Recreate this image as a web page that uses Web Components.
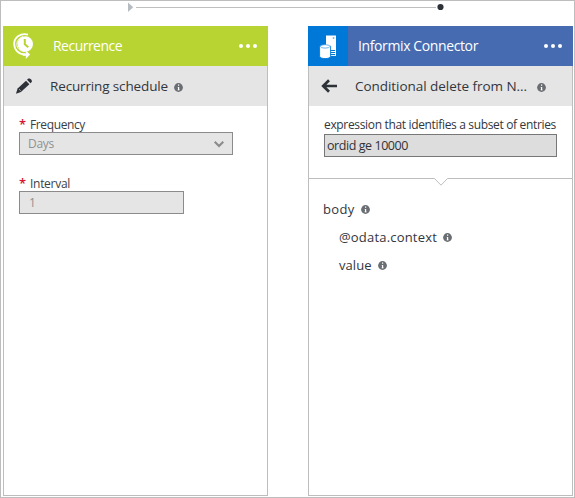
<!DOCTYPE html>
<html lang="en">
<head>
<meta charset="utf-8">
<title>Logic flow</title>
<style>
html, body { margin: 0; height: 100%; background: #fff; font-family: "Open Sans", "Noto Sans", sans-serif; color: #32363d; }
</style>
</head>
<body>
<flow-canvas>
  <flow-connector slot="connector"></flow-connector>
  <flow-card accent="#b8d432" icon="recurrence" glyph="pencil">
    <fit-text slot="title" w="69" size="14">Recurrence</fit-text>
    <fit-text slot="subtitle" w="118" size="13.5">Recurring schedule</fit-text>
    <form-field required kind="select" w="214">
      <fit-text slot="label" w="55" size="12">Frequency</fit-text>
      <fit-text slot="value" w="26" size="12">Days</fit-text>
    </form-field>
    <form-field required w="165" class="second">
      <fit-text slot="label" w="40" size="12">Interval</fit-text>
      <fit-text slot="value" size="12">1</fit-text>
    </form-field>
  </flow-card>
  <flow-card accent="#466bb0" icon="database" glyph="back">
    <fit-text slot="title" w="120" size="14">Informix Connector</fit-text>
    <fit-text slot="subtitle" w="172" size="13.5">Conditional delete from N...</fit-text>
    <form-field strong w="233">
      <fit-text slot="label" w="232" size="12">expression that identifies a subset of entries</fit-text>
      <fit-text slot="value" w="81" size="12.5">ordid ge 10000</fit-text>
    </form-field>
    <output-tree>
      <output-item><fit-text w="31.5" size="13">body</fit-text></output-item>
      <output-item nested><fit-text w="98" size="13">@odata.context</fit-text></output-item>
      <output-item nested><fit-text w="32.5" size="13">value</fit-text></output-item>
    </output-tree>
  </flow-card>
</flow-canvas>
<script>
const define = (name, html, setup) => customElements.define(name, class extends HTMLElement {
  connectedCallback() {
    if (this.shadowRoot) return;
    this.attachShadow({ mode: 'open' }).innerHTML = html;
    if (setup) setup(this, this.shadowRoot);
  }
});

/* Text run whose tracking is adjusted to fill a given width. */
define('fit-text', `<style>
:host { display: inline-block; white-space: nowrap; line-height: 20px; }
span { display: inline-block; }
</style><span><slot></slot></span>`, (el, root) => {
  const span = root.querySelector('span');
  el.style.fontSize = el.getAttribute('size') + 'px';
  const w = parseFloat(el.getAttribute('w'));
  if (w) span.style.letterSpacing = (w - span.getBoundingClientRect().width) / el.textContent.length + 'px';
});

define('info-dot', `<style>
:host { display: block; width: 9px; height: 9px; flex: none; }
svg { display: block; }
</style><svg width="9" height="9" viewBox="0 0 9 9"><circle cx="4.5" cy="4.5" r="4.4" fill="#6a6e73"/><path d="M4 1.5h1.2v1.2H4zM4 4h1.2v3.2H4z" fill="#fff"/><path d="M3.3 4H4v.6h-.7zM3.3 6.6h2.5v.7H3.3z" fill="#fff" fill-opacity=".6"/></svg>`);

const icons = {
  recurrence: `<svg width="40" height="40" viewBox="0 0 40 40"><circle cx="22.3" cy="18" r="7.7" fill="#fff"/><path d="M21.8 13v5.2l3.5 3" stroke="#b8d432" stroke-width="2" fill="none"/><path d="M25 8.6c-7.5-2-13.8 2.9-13.8 9.1 0 6.1 4.3 10.6 11 10.8" stroke="#fff" stroke-width="1.8" fill="none"/><path d="M20 10.7c-4 1-6.1 4-6.1 7.7 0 4.2 3.2 6.8 8 7.1" stroke="#fff" stroke-width="1" fill="none"/><path d="M19.8 27.6h3v-3.2l4.3 4.2-4.3 4.3v-3.2h-3z" fill="#fff"/></svg>`,
  database: `<svg width="40" height="40" viewBox="0 0 40 40"><path fill="#0078d7" d="M0 0h40v40H0z"/><path d="M18 9.5h10v20.4H18z" fill="#fff"/><path d="M24.8 12h1.5" stroke="#0078d7"/><path d="M22 24.5h5M22 26.5h5M22 28.5h5" stroke="#0078d7" stroke-width="1"/><path d="M11.6 20.2v10c0 3.2 11 3.2 11 0v-10z" fill="#fff" stroke="#0078d7" stroke-width=".9"/><ellipse cx="17.1" cy="20.4" rx="4.8" ry="1.7" fill="#fff" stroke="#4ba1e5" stroke-width=".8"/></svg>`,
  pencil: `<svg width="40" height="40" viewBox="0 0 40 40"><g fill="#2d3138"><path d="M13 27.7l1.6-5.2 8.4-7.8 3.4 3.6-8.5 7.8z"/><path d="M24 13.8l1.1-1c1.7-1.5 4.9 1.7 3.4 3.4l-1.1 1.1z"/></g><path d="M16.2 23.3l1.4 1.3" stroke="#e5e5e5" stroke-width=".8"/></svg>`,
  back: `<svg width="40" height="40" viewBox="0 0 40 40"><path d="M29 20H15M21 14.3L15.2 20l5.8 5.7" stroke="#2d3138" stroke-width="2.7" fill="none"/></svg>`
};

define('flow-canvas', `<style>
:host { display: flex; flex-direction: column; box-sizing: border-box; width: 575px; height: 498px; border: 1px solid #bdbdbd; padding: 0 2px 2px; }
.lane { height: 25px; flex: none; }
.cards { display: grid; grid-template-columns: 265px 265px; column-gap: 40px; flex: none; height: 470px; }
</style><div class="lane"><slot name="connector"></slot></div><div class="cards"><slot></slot></div>`);

define('flow-connector', `<style>
:host { display: flex; align-items: center; height: 12px; padding-left: 125px; }
svg { display: block; }
</style><svg width="318" height="12" viewBox="0 0 318 12"><path d="M0 1.5L5.2 6.3 0 11z" fill="#b6bcc2"/><path d="M8 6.5h300" stroke="#bfbfbf"/><circle cx="312.5" cy="6" r="3.1" fill="#2d3138"/></svg>`);

define('flow-card', `<style>
:host { display: flex; flex-direction: column; box-sizing: border-box; min-width: 0; }
header, .sub { display: flex; align-items: center; height: 40px; flex: none; box-sizing: border-box; }
header { color: #fff; background: var(--accent); }
.icon { width: 40px; height: 40px; flex: none; }
.title { margin: 0 0 4px 10px; flex: 1; height: 20px; }
.more { display: flex; gap: 3px; margin: 0 11px 1px 0; }
.more i { width: 4px; height: 4px; border-radius: 50%; background: #fff; }
.sub { background: #e5e5e5; border: solid #bdbdbd; border-width: 0 1px; }
.sub .icon { margin-left: -1px; }
.sub .title { flex: none; margin-left: 7px; }
info-dot { margin: 2px 0 0 6px; }
:host([glyph=back]) info-dot { margin-left: 10px; }
.body { flex: 1; border: 1px solid #bdbdbd; border-top: 0; }
svg { display: block; }
</style>
<header><div class="icon"></div><div class="title"><slot name="title"></slot></div><div class="more"><i></i><i></i><i></i></div></header>
<div class="sub"><div class="icon glyph"></div><div class="title"><slot name="subtitle"></slot></div><info-dot></info-dot></div>
<div class="body"><slot></slot></div>`, (el, root) => {
  el.style.setProperty('--accent', el.getAttribute('accent'));
  root.querySelector('header .icon').innerHTML = icons[el.getAttribute('icon')];
  root.querySelector('.glyph').innerHTML = icons[el.getAttribute('glyph')];
});

define('form-field', `<style>
:host { display: block; margin-left: 15px; padding-top: 9px; }
:host(.second) { padding-top: 19px; }
.label { display: flex; height: 17px; color: #3b3e43; }
:host([strong]) .label { height: 19px; color: #32363d; }
.star { display: none; width: 11px; color: #d6132c; font: 600 13px/19px "Open Sans", sans-serif; }
:host([required]) .star { display: block; }
.box { display: flex; align-items: center; justify-content: space-between; box-sizing: border-box; height: 23px; padding: 0 8px; border: 1px solid #8b8b8b; background: #e5e5e5; color: #919191; }
:host(.second) .box { padding-left: 9px; }
:host([strong]) .box { background: #ddd; border-color: #777; color: #303238; padding-left: 2px; }
:host([strong]) .box ::slotted(*) { margin-top: 1px; }
svg { display: none; }
:host([kind=select]) svg { display: block; }
</style><div class="label"><span class="star">*</span><slot name="label"></slot></div>
<div class="box"><slot name="value"></slot><svg width="10" height="8" viewBox="0 0 10 8"><path d="M.7 1.8L5 6l4.3-4.2" stroke="#8b8b8b" stroke-width="2.1" fill="none"/></svg></div>`, (el, root) => {
  root.querySelector('.box').style.width = el.getAttribute('w') + 'px';
});

define('output-tree', `<style>
:host { display: block; margin-top: 21px; }
svg { display: block; margin-bottom: 13px; }
</style><svg width="263" height="8" viewBox="0 0 263 8"><path d="M0 .5h125.5l6.5 6.7 6.5-6.7H263" stroke="#bdbdbd" fill="none"/></svg><slot></slot>`);

define('output-item', `<style>
:host { display: flex; align-items: center; height: 20px; margin-bottom: 8px; padding-left: 14px; }
:host([nested]) { padding-left: 30px; }
info-dot { margin: 1px 0 0 6px; }
</style><slot></slot><info-dot></info-dot>`);
</script>
</body>
</html>
